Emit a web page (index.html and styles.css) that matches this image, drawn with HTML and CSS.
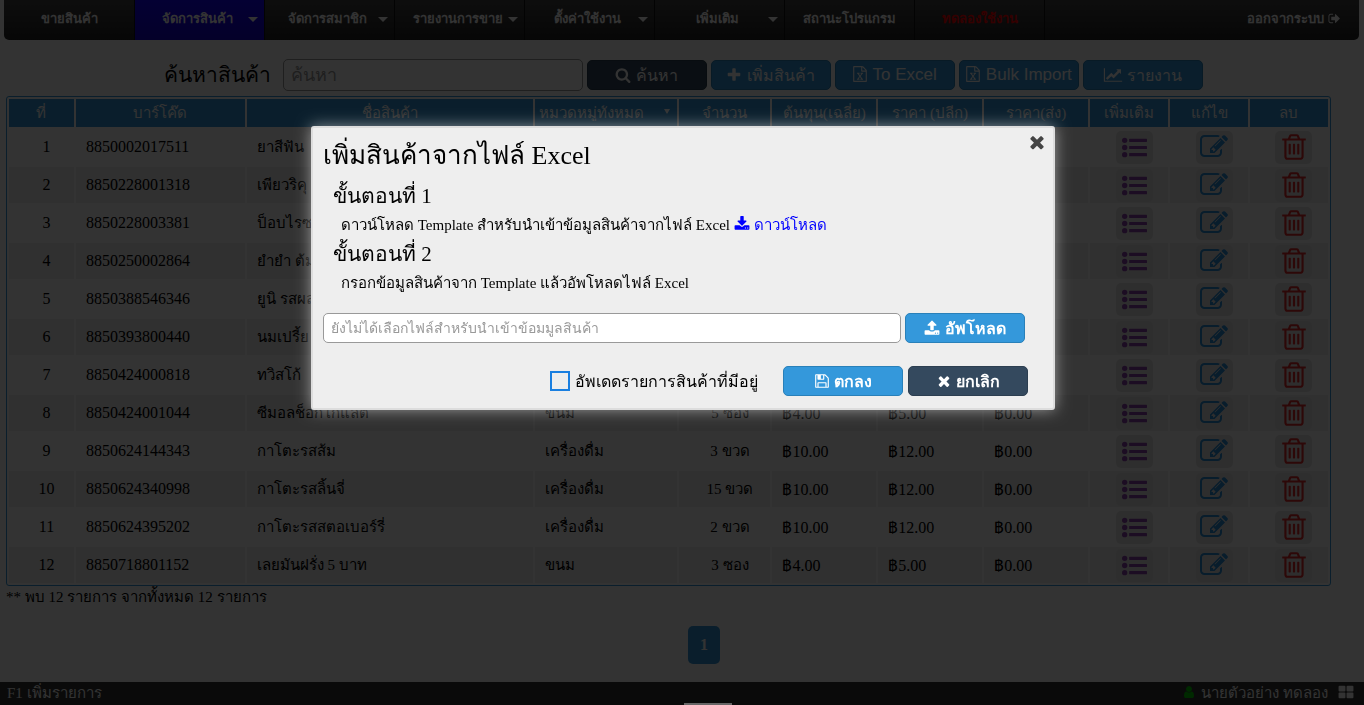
FILE: index.html
```html
<!DOCTYPE html>
<html lang="th">
<head>
  <meta charset="UTF-8" />
  <meta name="viewport" content="width=device-width, initial-scale=1.0" />
  <title>จัดการสินค้า</title>
  <link rel="stylesheet" href="styles.css">
</head>
<body>
  <svg class="sprite" aria-hidden="true">
    <symbol id="i-search" viewBox="0 0 1792 1792"><path d="M1216 832q0-185-131.500-316.500t-316.500-131.500-316.500 131.500-131.500 316.500 131.500 316.500 316.500 131.500 316.500-131.500 131.500-316.500zm512 832q0 52-38 90t-90 38q-54 0-90-38l-343-342q-179 124-399 124-143 0-273.500-55.500t-225-150-150-225-55.500-273.500 55.500-273.500 150-225 225-150 273.500-55.500 273.500 55.500 225 150 150 225 55.500 273.500q0 220-124 399l343 343q37 37 37 90z"/></symbol>
    <symbol id="i-plus" viewBox="0 0 1792 1792"><path d="M1600 736v192q0 40-28 68t-68 28h-416v416q0 40-28 68t-68 28h-192q-40 0-68-28t-28-68v-416h-416q-40 0-68-28t-28-68v-192q0-40 28-68t68-28h416v-416q0-40 28-68t68-28h192q40 0 68 28t28 68v416h416q40 0 68 28t28 68z"/></symbol>
    <symbol id="i-excel" viewBox="0 0 1792 1792"><path d="M1596 380q28 28 48 76t20 88v1152q0 40-28 68t-68 28h-1344q-40 0-68-28t-28-68v-1600q0-40 28-68t68-28h896q40 0 88 20t76 48zm-444-244v376h376q-10-29-22-41l-313-313q-12-12-41-22zm384 1528v-1024h-416q-40 0-68-28t-28-68v-416h-768v1536h1280zm-979-234v106h281v-106h-75l103-161q5-7 10-16.500t7.500-13.500 3.500-4h2q1 4 5 10 2 4 4.500 7.500t6 8 6.500 8.500l107 161h-76v106h291v-106h-68l-192-273 195-282h67v-107h-279v107h74l-103 159q-4 7-10 16.500t-9 13.500l-2 3h-2q-1-4-5-10-6-11-17-23l-106-159h76v-107h-290v107h68l189 272-194 283h-68z"/></symbol>
    <symbol id="i-chart" viewBox="0 0 2048 1792"><path d="M2048 1536v128h-2048v-1536h128v1408h1920zm-128-1248v435q0 21-19.500 29.500t-35.500-7.500l-121-121-633 633q-10 10-23 10t-23-10l-233-233-416 416-192-192 585-585q10-10 23-10t23 10l233 233 464-464-121-121q-16-16-7.500-35.500t29.500-19.500h435q14 0 23 9t9 23z"/></symbol>
    <symbol id="i-times" viewBox="0 0 1792 1792"><path d="M1490 1322q0 40-28 68l-136 136q-28 28-68 28t-68-28l-294-294-294 294q-28 28-68 28t-68-28l-136-136q-28-28-28-68t28-68l294-294-294-294q-28-28-28-68t28-68l136-136q28-28 68-28t68 28l294 294 294-294q28-28 68-28t68 28l136 136q28 28 28 68t-28 68l-294 294 294 294q28 28 28 68z"/></symbol>
    <symbol id="i-download" viewBox="0 0 1792 1792"><path d="M1344 1344q0-26-19-45t-45-19-45 19-19 45 19 45 45 19 45-19 19-45zm256 0q0-26-19-45t-45-19-45 19-19 45 19 45 45 19 45-19 19-45zm128-224v320q0 40-28 68t-68 28h-1472q-40 0-68-28t-28-68v-320q0-40 28-68t68-28h465l135 136q58 56 136 56t136-56l136-136h464q40 0 68 28t28 68zm-325-569q17 41-14 70l-448 448q-18 19-45 19t-45-19l-448-448q-31-29-14-70 17-39 59-39h256v-448q0-26 19-45t45-19h256q26 0 45 19t19 45v448h256q42 0 59 39z"/></symbol>
    <symbol id="i-upload" viewBox="0 0 1792 1792"><path d="M1344 1472q0-26-19-45t-45-19-45 19-19 45 19 45 45 19 45-19 19-45zm256 0q0-26-19-45t-45-19-45 19-19 45 19 45 45 19 45-19 19-45zm128-224v320q0 40-28 68t-68 28h-1472q-40 0-68-28t-28-68v-320q0-40 28-68t68-28h427q21 56 70.500 92t110.500 36h256q61 0 110.500-36t70.500-92h427q40 0 68 28t28 68zm-325-648q-17 40-59 40h-256v448q0 26-19 45t-45 19h-256q-26 0-45-19t-19-45v-448h-256q-42 0-59-40-17-39 14-69l448-448q18-19 45-19t45 19l448 448q31 30 14 69z"/></symbol>
    <symbol id="i-save" viewBox="0 0 1792 1792"><path d="M512 1536h768v-384h-768v384zm896 0h128v-896q0-14-10-38.500t-20-34.500l-281-281q-10-10-34-20t-39-10v416q0 40-28 68t-68 28h-576q-40 0-68-28t-28-68v-416h-128v1280h128v-416q0-40 28-68t68-28h832q40 0 68 28t28 68v416zm-384-928v-320q0-13-9.500-22.500t-22.500-9.500h-192q-13 0-22.500 9.500t-9.500 22.500v320q0 13 9.500 22.500t22.500 9.500h192q13 0 22.500-9.500t9.500-22.500zm640 32v928q0 40-28 68t-68 28h-1344q-40 0-68-28t-28-68v-1344q0-40 28-68t68-28h928q40 0 88 20t76 48l280 280q28 28 48 76t20 88z"/></symbol>
    <symbol id="i-trash" viewBox="0 0 1792 1792"><path d="M704 736v576q0 14-9 23t-23 9h-64q-14 0-23-9t-9-23v-576q0-14 9-23t23-9h64q14 0 23 9t9 23zm256 0v576q0 14-9 23t-23 9h-64q-14 0-23-9t-9-23v-576q0-14 9-23t23-9h64q14 0 23 9t9 23zm256 0v576q0 14-9 23t-23 9h-64q-14 0-23-9t-9-23v-576q0-14 9-23t23-9h64q14 0 23 9t9 23zm128 724v-948h-896v948q0 22 7 40.500t14.500 27 10.500 8.500h832q3 0 10.500-8.500t14.500-27 7-40.500zm-672-1076h448l-48-117q-7-9-17-11h-317q-10 2-17 11zm928 32v64q0 14-9 23t-23 9h-96v948q0 83-47 143.500t-113 60.500h-832q-66 0-113-58.500t-47-141.500v-952h-96q-14 0-23-9t-9-23v-64q0-14 9-23t23-9h309l70-167q15-37 54-63t79-26h320q40 0 79 26t54 63l70 167h309q14 0 23 9t9 23z"/></symbol>
    <symbol id="i-edit" viewBox="0 0 1792 1792"><path d="M888 1184l116-116-152-152-116 116v56h96v96h56zm440-720q-16-16-33 1l-350 350q-17 17-1 33t33-1l350-350q17-17 1-33zm80 594v190q0 119-84.500 203.500t-203.500 84.500h-832q-119 0-203.500-84.500t-84.500-203.500v-832q0-119 84.500-203.500t203.500-84.500h832q63 0 117 25 15 7 18 23 3 17-9 29l-49 49q-14 14-32 8-23-6-45-6h-832q-66 0-113 47t-47 113v832q0 66 47 113t113 47h832q66 0 113-47t47-113v-126q0-13 9-22l64-64q15-15 35-7t20 29zm-96-738l288 288-672 672h-288v-288zm444 132l-92 92-288-288 92-92q28-28 68-28t68 28l152 152q28 28 28 68t-28 68z"/></symbol>
    <symbol id="i-list" viewBox="0 0 1792 1792"><circle cx="192" cy="384" r="192"/><circle cx="192" cy="896" r="192"/><circle cx="192" cy="1408" r="192"/><rect x="512" y="272" width="1280" height="224" rx="40"/><rect x="512" y="784" width="1280" height="224" rx="40"/><rect x="512" y="1296" width="1280" height="224" rx="40"/></symbol>
    <symbol id="i-signout" viewBox="0 0 1792 1792"><path d="M704 1440q0 4 1 20t.5 26.500-3 23.500-10 19.500-20.500 6.500h-320q-119 0-203.500-84.500t-84.500-203.500v-704q0-119 84.500-203.500t203.500-84.500h320q13 0 22.500 9.500t9.500 22.500q0 4 1 20t.5 26.500-3 23.500-10 19.500-20.500 6.500h-320q-66 0-113 47t-47 113v704q0 66 47 113t113 47h312l11.500 1 11.500 3 8 5.500 7 9 2 13.500zm928-544q0 26-19 45l-544 544q-19 19-45 19t-45-19-19-45v-288h-448q-26 0-45-19t-19-45v-384q0-26 19-45t45-19h448v-288q0-26 19-45t45-19 45 19l544 544q19 19 19 45z"/></symbol>
    <symbol id="i-user" viewBox="0 0 1792 1792"><path d="M1536 1399q0 109-62.500 187t-150.500 78h-854q-88 0-150.500-78t-62.500-187q0-85 8.500-160.500t31.500-152 58.500-131 94-89 134.500-34.500q131 128 313 128t313-128q76 0 134.500 34.500t94 89 58.500 131 31.500 152 8.500 160.500zm-256-887q0 159-112.500 271.500t-271.500 112.500-271.500-112.500-112.500-271.500 112.500-271.500 271.500-112.500 271.500 112.500 112.500 271.500z"/></symbol>
    <symbol id="i-grid" viewBox="0 0 1792 1792"><rect x="64" y="192" width="768" height="640" rx="110"/><rect x="960" y="192" width="768" height="640" rx="110"/><rect x="64" y="960" width="768" height="640" rx="110"/><rect x="960" y="960" width="768" height="640" rx="110"/></symbol>
  </svg>

  <nav class="menu">
    <a href="#">ขายสินค้า</a>
    <a href="#" class="sub active">จัดการสินค้า</a>
    <a href="#" class="sub">จัดการสมาชิก</a>
    <a href="#" class="sub">รายงานการขาย</a>
    <a href="#" class="sub">ตั้งค่าใช้งาน</a>
    <a href="#" class="sub">เพิ่มเติม</a>
    <a href="#">สถานะโปรแกรม</a>
    <a href="#" class="trial">ทดลองใช้งาน</a>
    <a href="#" class="logout">ออกจากระบบ <svg class="icon"><use href="#i-signout"/></svg></a>
  </nav>

  <main>
    <form class="toolbar">
      <label for="search">ค้นหาสินค้า</label>
      <input type="text" id="search" name="search" placeholder="ค้นหา" />
      <button type="submit" class="btn dark"><svg class="icon"><use href="#i-search"/></svg> ค้นหา</button>
      <button type="button" class="btn"><svg class="icon"><use href="#i-plus"/></svg> เพิ่มสินค้า</button>
      <button type="button" class="btn excel"><svg class="icon"><use href="#i-excel"/></svg> To Excel</button>
      <button type="button" class="btn excel"><svg class="icon"><use href="#i-excel"/></svg> Bulk Import</button>
      <button type="button" class="btn"><svg class="icon wide"><use href="#i-chart"/></svg> รายงาน</button>
    </form>

    <table class="products">
      <colgroup>
        <col class="w5"><col class="w13"><col class="w22"><col class="w11"><col class="w7">
        <col class="w8"><col class="w8"><col class="w8"><col class="w6"><col class="w6"><col class="w6">
      </colgroup>
      <thead>
        <tr>
          <th>ที่</th>
          <th>บาร์โค๊ด</th>
          <th>ชื่อสินค้า</th>
          <th class="category">
            <select aria-label="หมวดหมู่"><option>หมวดหมู่ทั้งหมด</option></select>
          </th>
          <th>จำนวน</th>
          <th>ต้นทุน(เฉลี่ย)</th>
          <th>ราคา (ปลีก)</th>
          <th>ราคา(ส่ง)</th>
          <th>เพิ่มเติม</th>
          <th>แก้ไข</th>
          <th>ลบ</th>
        </tr>
      </thead>
      <tbody id="rows"></tbody>
    </table>
    <p class="summary">** พบ 12 รายการ จากทั้งหมด 12 รายการ</p>

    <div class="pages"><a href="#">1</a></div>
  </main>

  <footer>
    <span>F1 เพิ่มรายการ</span>
    <span class="user"><svg class="icon green"><use href="#i-user"/></svg> นายตัวอย่าง ทดลอง <svg class="icon grid"><use href="#i-grid"/></svg></span>
  </footer>

  <div class="overlay"></div>
  <div class="handle"></div>

  <div class="modal" role="dialog" aria-labelledby="modalTitle">
    <button type="button" class="close" aria-label="ปิด"><svg class="icon"><use href="#i-times"/></svg></button>
    <h1 id="modalTitle">เพิ่มสินค้าจากไฟล์ Excel</h1>
    <h2>ขั้นตอนที่ 1</h2>
    <p>ดาวน์โหลด Template สำหรับนำเข้าข้อมูลสินค้าจากไฟล์ Excel <a href="#"><svg class="icon"><use href="#i-download"/></svg> ดาวน์โหลด</a></p>
    <h2>ขั้นตอนที่ 2</h2>
    <p>กรอกข้อมูลสินค้าจาก Template แล้วอัพโหลดไฟล์ Excel</p>
    <div class="upload">
      <input type="text" aria-label="ไฟล์ Excel" placeholder="ยังไม่ได้เลือกไฟล์สำหรับนำเข้าข้อมมูลสินค้า" readonly />
      <button type="button" class="btn"><svg class="icon"><use href="#i-upload"/></svg> อัพโหลด</button>
    </div>
    <div class="actions">
      <input type="checkbox" id="update" />
      <label for="update">อัพเดดรายการสินค้าที่มีอยู่</label>
      <button type="button" class="btn"><svg class="icon"><use href="#i-save"/></svg> ตกลง</button>
      <button type="button" class="btn dark"><svg class="icon"><use href="#i-times"/></svg> ยกเลิก</button>
    </div>
  </div>

  <script src="script.js"></script>
</body>
</html>
```
FILE: styles.css
```css
* {
  box-sizing: border-box;
}

body {
  margin: 0;
  min-height: 100vh;
  background: #fff;
  color: #000;
  font-family: "Liberation Serif", serif;
  font-size: 15px;
}

.sprite {
  display: none;
}

.icon {
  width: 16px;
  height: 16px;
  fill: currentColor;
  vertical-align: -2px;
}

/* top menu */
.menu {
  display: flex;
  height: 40px;
  margin: 0 5px 0 4px;
  padding-left: 1px;
  background: linear-gradient(#444, #222);
  border-radius: 0 0 5px 5px;
  overflow: hidden;
  font-family: "Liberation Sans", sans-serif;
  font-size: 13px;
  font-weight: bold;
}

.menu a {
  position: relative;
  width: 130px;
  border-right: 1px solid #111;
  color: #fff;
  line-height: 38px;
  text-align: center;
  text-decoration: none;
  white-space: nowrap;
}

.menu a.sub {
  padding-right: 4px;
}

.menu a.sub::after {
  content: "";
  position: absolute;
  right: 6px;
  top: 17px;
  border: 5px solid transparent;
  border-top-color: #fff;
  border-bottom: 0;
}

.menu a.active {
  background: linear-gradient(#1400ff, #1400cc);
}

.menu a.trial {
  color: red;
}

.menu a.logout {
  width: auto;
  margin-left: auto;
  padding-right: 18px;
  border: 0;
}

.menu .icon {
  width: 13px;
  height: 13px;
}

/* search bar */
.toolbar {
  display: flex;
  justify-content: center;
  align-items: center;
  gap: 4px;
  padding: 19px 0 5px 2px;
}

.toolbar label {
  margin-right: 8px;
  font-size: 21px;
  line-height: 30px;
}

input[type="text"] {
  height: 30px;
  padding: 0 7px;
  border: 1px solid #999;
  border-radius: 5px;
  background: #fff;
  font-family: "Liberation Sans", sans-serif;
  font-size: 14px;
}

input::placeholder {
  color: #999;
}

.toolbar input[type="text"] {
  width: 300px;
  height: 32px;
  font-size: 18px;
}

.btn {
  width: 120px;
  height: 30px;
  padding: 0;
  border: 1px solid #2980b9;
  border-radius: 5px;
  background: #3498db;
  color: #fff;
  font-family: "Liberation Sans", sans-serif;
  font-size: 16px;
  white-space: nowrap;
  cursor: pointer;
}

.btn.dark {
  border-color: #2c3e50;
  background: #34495e;
}

.btn.excel {
  font-size: 17px;
}

.icon.wide {
  width: 20px;
}

/* product table */
.products {
  width: calc(100% - 39px);
  margin-left: 6px;
  border: 1px solid #3498db;
  border-radius: 3px;
  border-spacing: 2px;
  table-layout: fixed;
}

.w5 { width: 5%; }
.w6 { width: 6%; }
.w7 { width: 7%; }
.w8 { width: 8%; }
.w11 { width: 11%; }
.w13 { width: 13%; }
.w22 { width: 22%; }

.products th {
  height: 28px;
  padding: 0;
  background: #3498db;
  color: #fff;
  font-weight: normal;
  white-space: nowrap;
}

.category {
  position: relative;
}

.category::after {
  content: "";
  position: absolute;
  right: 7px;
  top: 10px;
  border: 3px solid transparent;
  border-top: 5px solid #fff;
  border-bottom: 0;
}

.category select {
  width: 100%;
  padding: 0 4px;
  border: 0;
  appearance: none;
  background: transparent;
  color: #fff;
  font: inherit;
}

.products td {
  height: 36px;
  padding: 0 0 0 10px;
  white-space: nowrap;
}

.products tr:nth-child(even) td {
  background: #eee;
}

.products td.center {
  text-align: center;
}

.products td.num {
  font-size: 16px;
}

.tool {
  display: block;
  width: 37px;
  height: 33px;
  margin: 0 auto;
  padding: 0;
  border: 0;
  border-radius: 5px;
  background: #e6e6e6;
}

.tool .icon {
  display: block;
  width: 28px;
  height: 28px;
  margin: 0 auto;
}

.tool.more { color: #8e44ad; }
.tool.more .icon { width: 25px; height: 25px; }
.tool.edit { color: #2a8fdb; }
.tool.delete { color: #e02a2a; }
.tool.delete .icon { width: 30px; height: 30px; }

.summary {
  margin: 0 6px;
  line-height: 22px;
}

.pages {
  padding: 18px 0 41px;
  text-align: center;
}

.pages a {
  display: inline-block;
  width: 32px;
  margin-left: 44px;
  border-radius: 5px;
  background: #3498db;
  color: #fff;
  font-size: 16px;
  font-weight: bold;
  line-height: 38px;
  text-decoration: none;
}

footer {
  position: fixed;
  right: 0;
  bottom: 0;
  left: 0;
  display: flex;
  justify-content: space-between;
  height: 23px;
  padding: 0 10px 0 7px;
  background: #333;
  color: #fff;
  line-height: 22px;
}

.user {
  font-family: "Liberation Sans", sans-serif;
}

.icon.green {
  width: 14px;
  color: #0c0;
}

.icon.grid {
  margin-left: 6px;
}

.overlay {
  position: fixed;
  inset: 0;
  background: rgba(0, 0, 0, 0.8);
}

.handle {
  position: fixed;
  right: 0;
  bottom: 0;
  left: 52px;
  width: 48px;
  height: 2px;
  margin: 0 auto;
  background: #666;
}

/* import dialog */
.modal {
  position: fixed;
  top: 126px;
  left: 2px;
  right: 0;
  width: 744px;
  margin: 0 auto;
  padding: 10px 25px 12px 10px;
  border: 2px solid #ddd;
  border-radius: 3px;
  background: #eee;
  box-shadow: 0 0 15px rgba(255, 255, 255, 0.5);
}

.modal h1 {
  margin: 0 0 8px;
  font-size: 26px;
  font-weight: normal;
  line-height: 36px;
}

.modal h2 {
  margin: 0 0 0 10px;
  font-size: 21px;
  font-weight: normal;
  line-height: 29px;
}

.modal p {
  margin: 0 0 0 18px;
  line-height: 29px;
}

.modal p a {
  color: #00f;
  text-decoration: none;
}

.close {
  position: absolute;
  top: 4px;
  right: 6px;
  padding: 0;
  border: 0;
  background: none;
  color: #444;
}

.close .icon {
  display: block;
  width: 20px;
  height: 20px;
}

.modal .btn {
  font-weight: bold;
}

.upload {
  display: flex;
  gap: 4px;
  margin: 15px 3px 0 0;
}

.upload input[type="text"] {
  flex: 1;
}

.actions {
  display: flex;
  align-items: center;
  justify-content: flex-end;
  gap: 5px;
  margin-top: 23px;
}

.actions label {
  margin-right: 20px;
  font-size: 16px;
}

.actions input {
  width: 20px;
  height: 20px;
  margin: 0;
  border: 2px solid #1a7fe0;
  appearance: none;
}
```
FILE: script.js
```js
// barcode, name, category, amount, cost, price, wholesale
const products = [
  ['8850002017511', 'ยาสีฟัน'],
  ['8850228001318', 'เพียวริคุ'],
  ['8850228003381', 'ป็อบไรซ'],
  ['8850250002864', 'ยำยำ ต้ม'],
  ['8850388546346', 'ยูนิ รสผล'],
  ['8850393800440', 'นมเปรี้ย'],
  ['8850424000818', 'ทวิสโก้'],
  ['8850424001044', 'ซีมอลช็อกโกแลต', 'ขนม', '5 ซอง', '฿4.00', '฿5.00', '฿0.00'],
  ['8850624144343', 'กาโตะรสส้ม', 'เครื่องดื่ม', '3 ขวด', '฿10.00', '฿12.00', '฿0.00'],
  ['8850624340998', 'กาโตะรสลิ้นจี่', 'เครื่องดื่ม', '15 ขวด', '฿10.00', '฿12.00', '฿0.00'],
  ['8850624395202', 'กาโตะรสสตอเบอร์รี่', 'เครื่องดื่ม', '2 ขวด', '฿10.00', '฿12.00', '฿0.00'],
  ['8850718801152', 'เลยมันฝรั่ง 5 บาท', 'ขนม', '3 ซอง', '฿4.00', '฿5.00', '฿0.00']
];

const tool = (name, icon, label) =>
  `<td><button type="button" class="tool ${name}" aria-label="${label}"><svg class="icon"><use href="#${icon}"/></svg></button></td>`;

document.getElementById('rows').innerHTML = products.map((p, i) => {
  const [code, name, category = '', amount = '', cost = '', price = '', wholesale = ''] = p;
  return `
  <tr>
    <td class="num center">${i + 1}</td>
    <td class="num">${code}</td>
    <td>${name}</td>
    <td>${category}</td>
    <td class="center">${amount}</td>
    <td class="num">${cost}</td>
    <td class="num">${price}</td>
    <td class="num">${wholesale}</td>
    ${tool('more', 'i-list', 'เพิ่มเติม')}
    ${tool('edit', 'i-edit', 'แก้ไข')}
    ${tool('delete', 'i-trash', 'ลบ')}
  </tr>`;
}).join('');
```
